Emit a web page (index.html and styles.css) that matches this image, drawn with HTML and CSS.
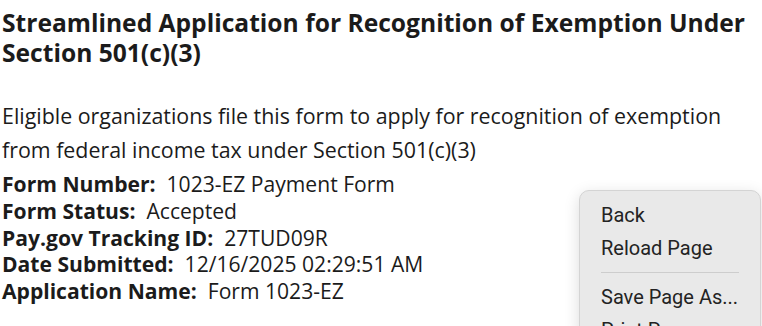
FILE: index.html
```html
<!DOCTYPE html>
<html lang="en">
<head>
<meta charset="utf-8">
<title>Streamlined Application</title>
<link rel="stylesheet" href="styles.css">
</head>
<body>
<main class="page">
  <h1 class="title">Streamlined Application for Recognition of Exemption Under Section 501(c)(3)</h1>
  <p class="desc">Eligible organizations file this form to apply for recognition of exemption from federal income tax under Section 501(c)(3)</p>
  <dl class="details">
    <div class="row"><dt>Form Number:</dt><dd>1023-EZ Payment Form</dd></div>
    <div class="row"><dt>Form Status:</dt><dd>Accepted</dd></div>
    <div class="row"><dt>Pay.gov Tracking ID:</dt><dd>27TUD09R</dd></div>
    <div class="row"><dt>Date Submitted:</dt><dd>12/16/2025 02:29:51 AM</dd></div>
    <div class="row"><dt>Application Name:</dt><dd>Form 1023-EZ</dd></div>
  </dl>
</main>
<div class="menu">
  <div class="menu-item">Back</div>
  <div class="menu-item">Reload Page</div>
  <div class="menu-sep"></div>
  <div class="menu-item">Save Page As...</div>
  <div class="menu-item">Print Page...</div>
</div>
</body>
</html>
```
FILE: styles.css
```css
html, body {
  margin: 0;
  padding: 0;
  background: #ffffff;
}
body {
  font-family: "Open Sans", "Noto Sans", sans-serif;
  color: #1b1b1b;
  overflow: hidden;
  width: 762px;
  height: 326px;
  position: relative;
}
.page {
  padding: 7.5px 0 0 2px;
  width: 760px;
}
.title {
  margin: 0;
  font-size: 24.6px;
  line-height: 30px;
  font-weight: 700;
}
.desc {
  margin: 31px 0 0 0;
  font-size: 21.4px;
  line-height: 34px;
}
.details {
  margin: 4.7px 0 0 0;
  font-size: 21.1px;
  line-height: 26.75px;
}
.row {
  display: flex;
  gap: 11px;
}
.row dt {
  font-weight: 700;
}
.row dd {
  margin: 0;
}
.menu {
  position: absolute;
  left: 579px;
  top: 190px;
  width: 182px;
  height: 150px;
  box-sizing: border-box;
  background: #e9e9e9;
  border: 1px solid #d4d4d4;
  border-radius: 10px;
  box-shadow: 0 4px 16px rgba(0, 0, 0, 0.14);
  padding: 7.7px 0 0 21px;
  font-family: Roboto, "Liberation Sans", sans-serif;
  font-size: 20px;
  color: #232323;
}
.menu-item {
  height: 33px;
  line-height: 33px;
  white-space: nowrap;
}
.menu-sep {
  height: 1px;
  background: #cdcdcd;
  margin: 7px 21px 8.7px 0;
}
```
